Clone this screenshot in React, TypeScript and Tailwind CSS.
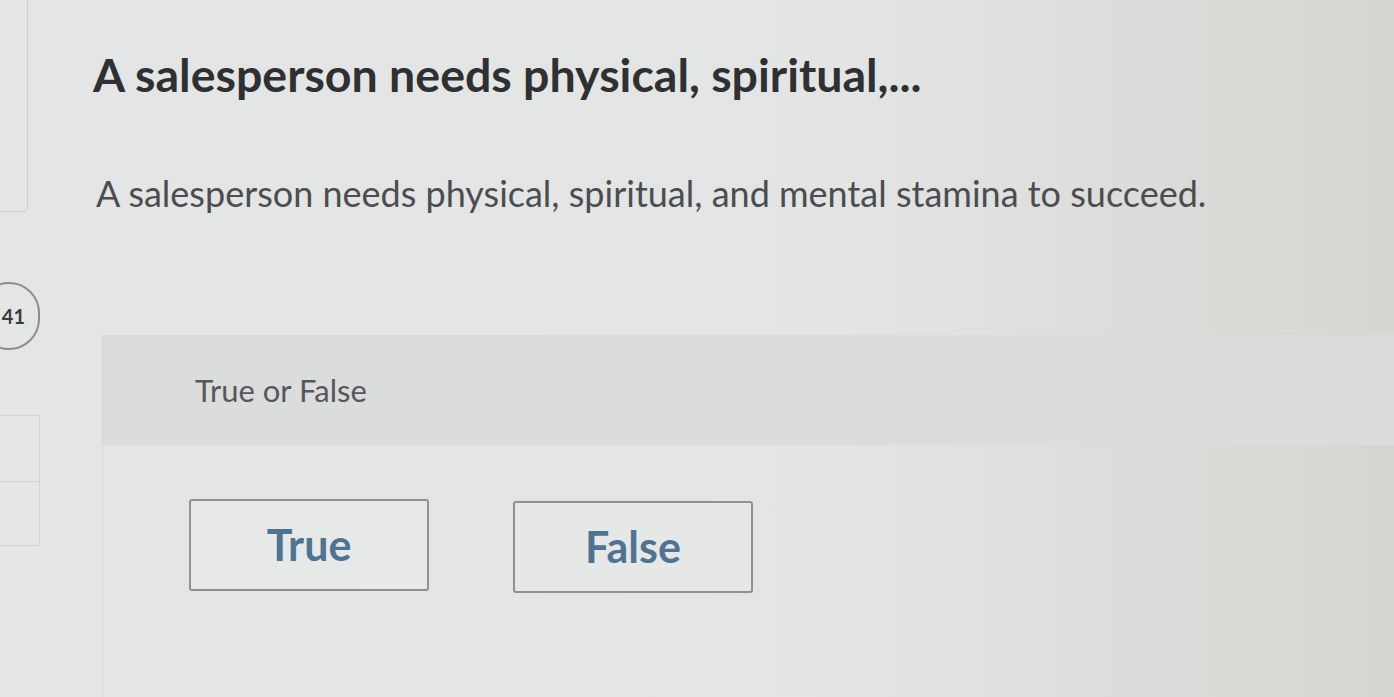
export default function App() {
  return (
    <div
      className="flex h-[697px] w-full overflow-hidden bg-[linear-gradient(90deg,#e4e6e6_0%,#e3e5e4_60%,#d6d6d2_100%)] text-[#333]"
      style={{ fontFamily: 'Lato, "Open Sans", sans-serif' }}
    >
      {/* Left rail */}
      <div className="flex w-[93px] shrink-0 flex-col">
        <div className="h-[212px] w-[28px] rounded-br-sm border-r border-b border-[#cfd1d1]" />
        <div className="mt-[70px] -ml-[22px] flex h-[68px] w-[62px] items-center justify-end rounded-full border-2 border-[#8c8e8e] pr-[13px] text-[20px] font-bold text-[#3a3c3e]">
          41
        </div>
        <div className="mt-[65px] flex w-[40px] flex-col border-r border-t border-b border-[#d3d5d5]">
          <div className="h-[66px] border-b border-[#d3d5d5]" />
          <div className="h-[63px]" />
        </div>
      </div>

      {/* Main */}
      <div className="flex min-w-0 flex-1 flex-col">
        <h1 className="mt-[46px] text-[46.5px] leading-[56px] font-bold text-[#2e3032]">
          A salesperson needs physical, spiritual,...
        </h1>
        <p className="mt-[66px] ml-[3px] text-[36px] leading-[50px] text-[#4b4d50]">
          A salesperson needs physical, spiritual, and mental stamina to succeed.
        </p>
        <div className="mt-[117px] ml-[9px] flex h-[110px] items-center border-l border-[#d0d2d2] bg-[#dbdcdc] pl-[92px] text-[31px] text-[#555759]">
          True or False
        </div>
        <div className="ml-[9px] flex flex-1 gap-[84px] border-l border-[#d6d8d8] pt-[54px] pl-[86px]">
          <button className="flex h-[92px] w-[240px] items-center justify-center rounded-[3px] border-2 border-[#8f9191] bg-[#e7e9e9] text-[43px] font-bold text-[#4f7492]">
            True
          </button>
          <button className="mt-[2px] flex h-[92px] w-[240px] items-center justify-center rounded-[3px] border-2 border-[#8f9191] bg-[#e6e8e8] text-[43px] font-bold text-[#4f7492]">
            False
          </button>
        </div>
      </div>
    </div>
  );
}
